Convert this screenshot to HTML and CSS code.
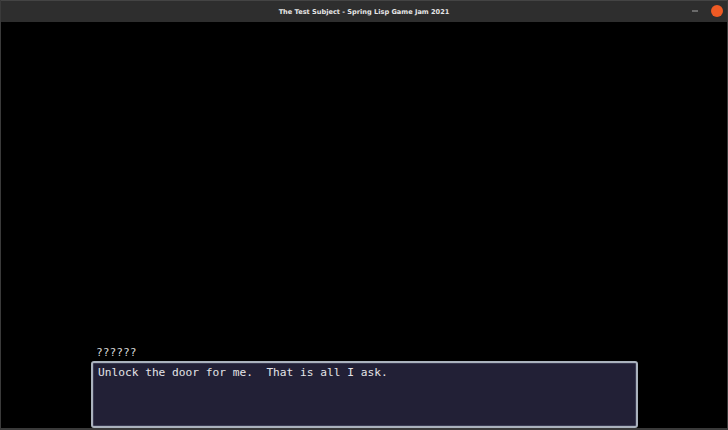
FILE: index.html
```html
<!DOCTYPE html>
<html>
<head>
<meta charset="utf-8">
<link rel="stylesheet" href="styles.css">
</head>
<body>
<div class="window">
  <header class="titlebar">
    <span class="title">The Test Subject - Spring Lisp Game Jam 2021</span>
    <div class="controls">
      <span class="min"></span>
      <span class="close"></span>
    </div>
  </header>
  <main class="game">
    <div class="speaker">??????</div>
    <div class="dialog">
      <p class="line">Unlock the door for me.  That is all I ask.</p>
    </div>
  </main>
</div>
</body>
</html>
```
FILE: styles.css
```css
* { box-sizing: border-box; }
html, body { margin: 0; padding: 0; background: #000; }
.window {
  width: 728px;
  height: 430px;
  display: flex;
  flex-direction: column;
  background: #000;
  border-left: 1px solid #3a3a3a;
  border-right: 1px solid #3a3a3a;
  border-bottom: 2px solid #3a3a3a;
}
.titlebar {
  height: 22px;
  flex: none;
  background: #2e2e2e;
  border-top: 1px solid #444;
  display: flex;
  align-items: center;
  justify-content: center;
  position: relative;
}
.title {
  font-family: "DejaVu Sans", sans-serif;
  font-weight: bold;
  font-size: 6.6px;
  color: #e6e6e6;
}
.controls {
  position: absolute;
  right: 4px;
  top: 4px;
  display: flex;
  align-items: center;
  gap: 13px;
}
.min {
  width: 6px;
  height: 2px;
  background: #6a6a6a;
}
.close {
  width: 12px;
  height: 12px;
  border-radius: 50%;
  background: #ef5a24;
}
.game {
  flex: 1;
  display: flex;
  flex-direction: column;
  justify-content: flex-end;
  padding: 0 0 0 90px;
}
.speaker {
  font-family: "DejaVu Sans Mono", monospace;
  font-size: 11.2px;
  color: #d8d8d8;
  padding-left: 5px;
  margin-bottom: 1px;
  line-height: 14px;
}
.dialog {
  width: 547px;
  height: 67px;
  background: #222036;
  border: 2px solid #aab2bd;
  border-radius: 3px;
  box-shadow: inset 0 0 0 1px #3a3a52;
  padding: 3px 5px;
}
.line {
  margin: 0;
  font-family: "DejaVu Sans Mono", monospace;
  font-size: 11.2px;
  line-height: 14px;
  color: #e4e4e8;
  white-space: pre;
}
```
